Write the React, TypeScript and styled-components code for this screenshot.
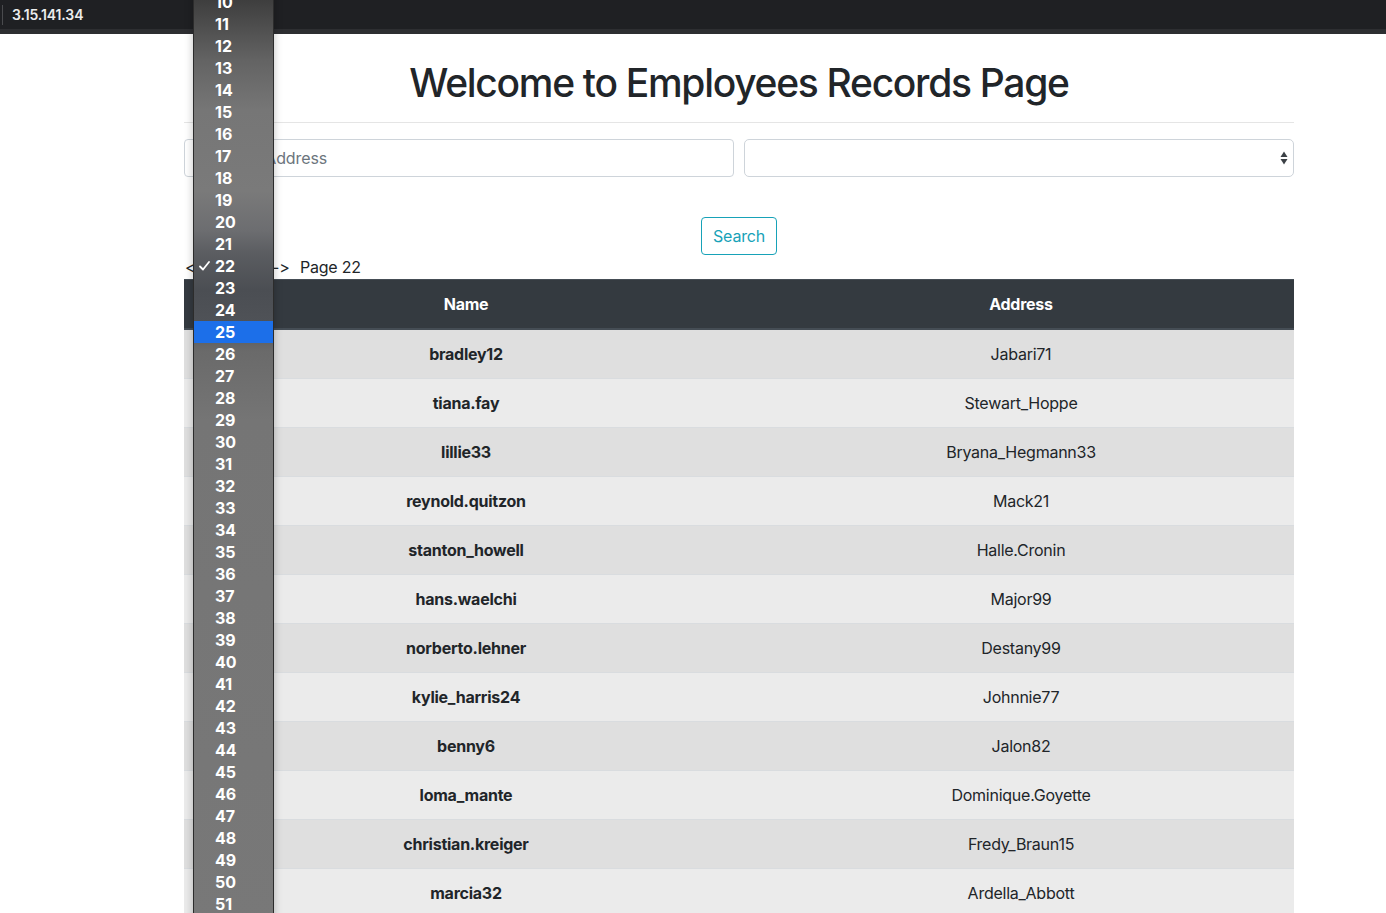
import React from "react";
import styled, { createGlobalStyle } from "styled-components";

const Global = createGlobalStyle`
  html, body { margin: 0; padding: 0; background: #fff; overflow: hidden; }
  body {
    font-family: Inter, "Noto Sans", sans-serif;
    color: #212529;
    font-variant-ligatures: none;
    font-feature-settings: "calt" 0, "liga" 0;
  }
  * { box-sizing: border-box; }
`;

const Page = styled.div`
  position: relative;
  min-height: 913px;
`;

const TopBar = styled.div`
  height: 34px;
  background: #1f2023;
  border-bottom: 5px solid #2d2e31;
  display: flex;
  align-items: center;
  padding-left: 2px;
`;

const Separator = styled.span`
  width: 1px;
  height: 20px;
  background: #4a4b4e;
  margin-right: 9px;
`;

const HostText = styled.span`
  color: #ececec;
  font-size: 14px;
  font-weight: 600;
  letter-spacing: -0.1px;
`;

const Container = styled.main`
  width: 1110px;
  margin-left: 184px;
`;

const Title = styled.h1`
  margin: 25px 0 15px;
  font-size: 39px;
  line-height: 48px;
  font-weight: 500;
  text-align: center;
  letter-spacing: -1.3px;
  color: #212529;
`;

const Divider = styled.hr`
  margin: 0 0 16px;
  border: 0;
  border-top: 1px solid rgba(0, 0, 0, 0.1);
`;

const FilterRow = styled.div`
  display: grid;
  grid-template-columns: 1fr 1fr;
  gap: 10px;
`;

const TextInput = styled.input`
  height: 38px;
  border: 1px solid #ced4da;
  border-radius: 4px;
  padding: 6px 12px;
  font-family: inherit;
  font-size: 16px;
  letter-spacing: -0.1px;
  color: #495057;
  &::placeholder { color: #6c757d; }
`;

const SelectBox = styled.div`
  position: relative;
  height: 38px;
  border: 1px solid #ced4da;
  border-radius: 5px;
  background: #fff;
  display: flex;
  align-items: center;
  justify-content: flex-end;
  padding-right: 4px;
`;

const ButtonRow = styled.div`
  display: flex;
  justify-content: center;
  margin-top: 40px;
`;

const SearchButton = styled.button`
  height: 38px;
  padding: 0 11px;
  border: 1px solid #17a2b8;
  border-radius: 4px;
  background: transparent;
  color: #17a2b8;
  font-family: inherit;
  font-size: 16px;
  letter-spacing: -0.2px;
`;

const Pager = styled.div`
  height: 24px;
  display: flex;
  align-items: center;
  font-size: 16px;
  line-height: 22px;
  padding-bottom: 1px;
`;

const Arrow = styled.span`
  padding-left: 1px;
`;

const PageSelect = styled.span`
  width: 68px;
  height: 20px;
`;

const PageLabel = styled.span`
  margin-left: 10px;
  letter-spacing: -0.2px;
`;

const Table = styled.table`
  width: 100%;
  border-collapse: collapse;
  font-size: 16px;
  line-height: 24px;
  letter-spacing: -0.25px;
`;

const HeadCell = styled.th`
  background: #343a40;
  color: #fff;
  font-weight: 700;
  text-align: center;
  padding: 12px 3px 12px 12px;
  border-top: 1px solid #454d55;
  border-bottom: 2px solid #454d55;
  width: 50%;
`;

const Row = styled.tr`
  &:nth-child(odd) { background: #dfdfdf; }
  &:nth-child(even) { background: #ebebeb; }
`;

const Cell = styled.td<{ $bold?: boolean }>`
  text-align: center;
  padding: 12px 3px 12px 12px;
  border-top: 1px solid #d9dcdf;
  font-weight: ${(p) => (p.$bold ? 700 : 400)};
  color: #212529;
`;

const Popup = styled.div`
  position: absolute;
  left: 193px;
  top: -9px;
  width: 81px;
  height: 940px;
  border: 1px solid #2c2c2c;
  border-top: 0;
  box-shadow: 0 0 8px rgba(0, 0, 0, 0.25);
  overflow: hidden;
  background: linear-gradient(
    to bottom,
    #393939 0px,
    #4a4a4a 29px,
    #636363 69px,
    #767676 119px,
    #7a7a7a 200px,
    #6c6d70 240px,
    #5b5d61 262px,
    #4b4e53 299px,
    #4f5257 331px,
    #6a6a6a 360px,
    #757575 430px,
    #787878 940px
  );
`;

const Option = styled.div<{ $active?: boolean }>`
  position: relative;
  height: 22px;
  line-height: 22px;
  padding-left: 21px;
  font-size: 16px;
  font-weight: 700;
  color: #fff;
  background: ${(p) => (p.$active ? "#1c6fe9" : "transparent")};
`;

const Check = styled.svg`
  position: absolute;
  left: 5px;
  top: 6px;
`;

const rows: [string, string][] = [
  ["bradley12", "Jabari71"],
  ["tiana.fay", "Stewart_Hoppe"],
  ["lillie33", "Bryana_Hegmann33"],
  ["reynold.quitzon", "Mack21"],
  ["stanton_howell", "Halle.Cronin"],
  ["hans.waelchi", "Major99"],
  ["norberto.lehner", "Destany99"],
  ["kylie_harris24", "Johnnie77"],
  ["benny6", "Jalon82"],
  ["loma_mante", "Dominique.Goyette"],
  ["christian.kreiger", "Fredy_Braun15"],
  ["marcia32", "Ardella_Abbott"],
];

const options = Array.from({ length: 43 }, (_, i) => i + 10);

export default function App() {
  return (
    <Page>
      <Global />
      <TopBar>
        <Separator />
        <HostText>3.15.141.34</HostText>
      </TopBar>
      <Container>
        <Title>Welcome to Employees Records Page</Title>
        <Divider />
        <FilterRow>
          <TextInput placeholder="Name or Address" />
          <SelectBox>
            <svg width="10" height="16" viewBox="0 0 10 16">
              <path d="M5 1.5 L8.5 7 H1.5 Z" fill="#3b4045" />
              <path d="M5 14.5 L8.5 9 H1.5 Z" fill="#3b4045" />
            </svg>
          </SelectBox>
        </FilterRow>
        <ButtonRow>
          <SearchButton>Search</SearchButton>
        </ButtonRow>
        <Pager>
          <Arrow>&lt;-</Arrow>
          <PageSelect />
          <Arrow>-&gt;</Arrow>
          <PageLabel>Page 22</PageLabel>
        </Pager>
        <Table>
          <thead>
            <tr>
              <HeadCell>Name</HeadCell>
              <HeadCell>Address</HeadCell>
            </tr>
          </thead>
          <tbody>
            {rows.map(([name, addr]) => (
              <Row key={name}>
                <Cell $bold>{name}</Cell>
                <Cell>{addr}</Cell>
              </Row>
            ))}
          </tbody>
        </Table>
      </Container>
      <Popup>
        {options.map((n) => (
          <Option key={n} $active={n === 25}>
            {n === 22 && (
              <Check width="11" height="10" viewBox="0 0 11 10">
                <path d="M1 5.5 L4 8.5 L10 1" fill="none" stroke="#fff" strokeWidth="1.8" strokeLinecap="round" strokeLinejoin="round" />
              </Check>
            )}
            {n}
          </Option>
        ))}
      </Popup>
    </Page>
  );
}
